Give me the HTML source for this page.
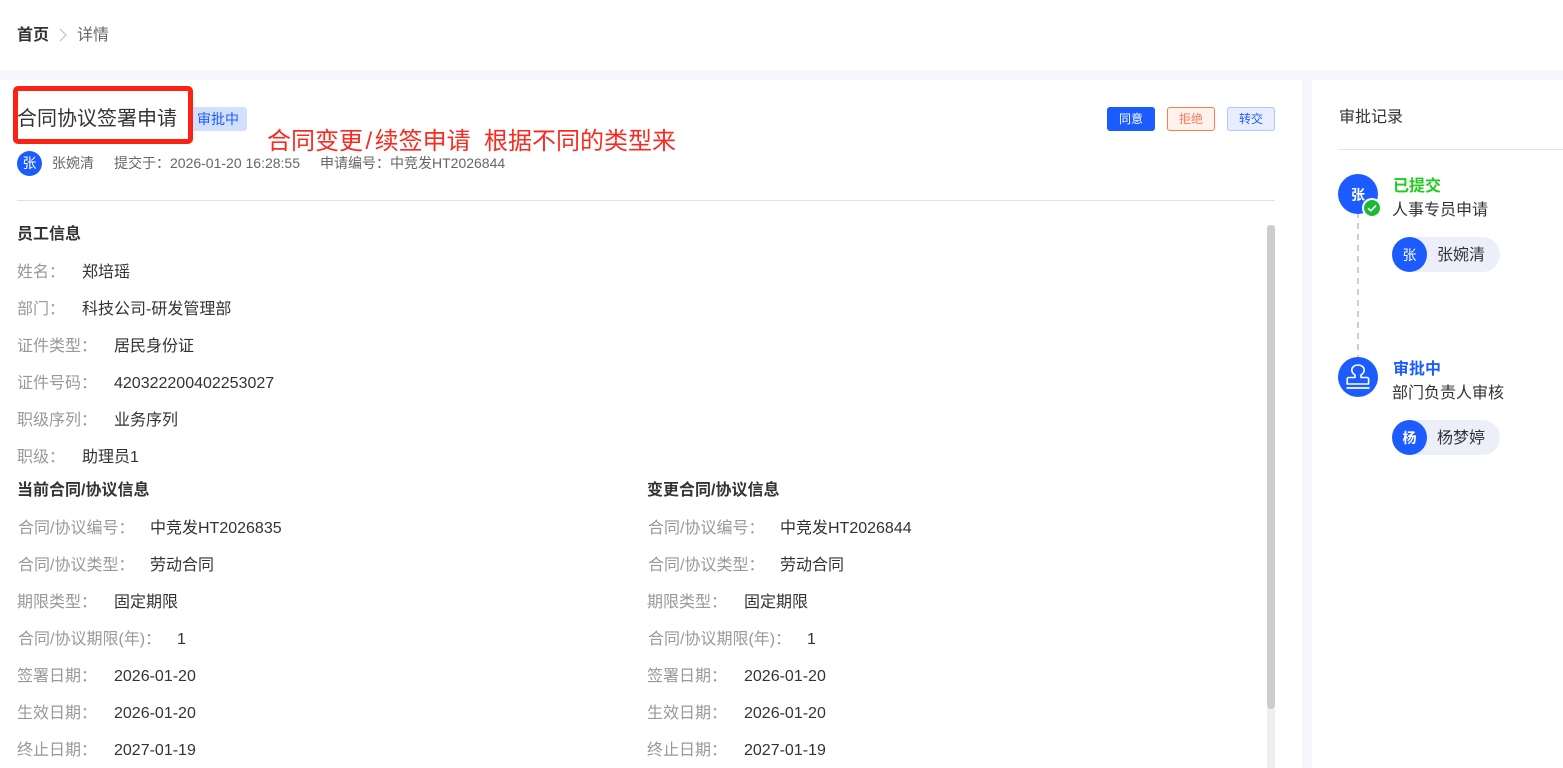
<!DOCTYPE html>
<html lang="zh">
<head>
<meta charset="utf-8">
<title>详情</title>
<style>
html,body{margin:0;padding:0;width:1563px;height:768px;overflow:hidden;background:#fff}
body{position:relative;font-family:"Liberation Sans","Noto Sans CJK SC",sans-serif;color:#333}
.a{position:absolute}
.t{position:absolute;white-space:nowrap;line-height:20px;font-size:16px;margin-top:2px}
.l{color:#999}
.v{color:#333}
.b{font-weight:700;color:#333}
.m{font-size:14px;color:#666;margin-top:0}
.btn{position:absolute;top:107px;width:48px;height:24px;box-sizing:border-box;border-radius:3px;border:1px solid;font-size:12px;line-height:22px;text-align:center}
.c{position:absolute;border-radius:50%;background:#1c5cff;color:#fff;text-align:center}
.pill{position:absolute;left:1392px;width:108px;height:35px;border-radius:18px;background:#eceffa}
</style>
</head>
<body>
<!-- backgrounds -->
<div class="a" style="left:0;top:70px;width:1563px;height:10px;background:#f5f6fb"></div>
<div class="a" style="left:1302px;top:70px;width:10px;height:698px;background:#f5f6fb"></div>

<!-- breadcrumb -->
<div class="t b" style="left:17px;top:24px">首页</div>
<svg class="a" style="left:58px;top:28px" width="10" height="14" viewBox="0 0 10 14"><path d="M2 1l6 6-6 6" fill="none" stroke="#b9b9b9" stroke-width="1"/></svg>
<div class="t" style="left:77px;top:24px;color:#666">详情</div>

<!-- header -->
<div class="t" style="left:17px;top:106px;font-size:20px;line-height:22px;color:#333">合同协议签署申请</div>
<div class="a" style="left:188px;top:107px;width:59px;height:24px;border-radius:3px;background:#d3dfff"></div>
<div class="t" style="left:197px;top:109px;margin-top:0;font-size:14px;color:#1c5cff">审批中</div>
<div class="a" style="left:13px;top:86px;width:180px;height:58px;box-sizing:border-box;border:5px solid #fb2115;border-radius:5px"></div>
<div class="t" style="left:267px;top:125px;font-size:24px;line-height:30px;color:#fb2a20">合同变更<span style="padding:0 2.5px">/</span>续签申请</div>
<div class="t" style="left:484px;top:125px;font-size:24px;line-height:30px;color:#fb2a20">根据不同的类型来</div>

<div class="btn" style="left:1107px;background:#1c5cff;border-color:#1c5cff;color:#fff">同意</div>
<div class="btn" style="left:1167px;background:#fff1ec;border-color:#ff7a55;color:#ff7a55">拒绝</div>
<div class="btn" style="left:1227px;background:#e8eeff;border-color:#a6cbff;color:#1c5cff">转交</div>

<div class="c" style="left:17px;top:151px;width:25px;height:25px;font-size:14px;line-height:25px">张</div>
<div class="t m" style="left:52px;top:153px">张婉清</div>
<div class="t m" style="left:114px;top:153px">提交于：2026-01-20 16:28:55</div>
<div class="t m" style="left:320px;top:153px">申请编号：中竞发HT2026844</div>

<div class="a" style="left:17px;top:200px;width:1258px;height:1px;background:#e0e0e8"></div>

<!-- scrollbar -->
<div class="a" style="left:1267px;top:225px;width:8px;height:543px;background:#eeeeee"></div>
<div class="a" style="left:1267px;top:225px;width:8px;height:484px;border-radius:4px;background:#cdcdcd"></div>

<!-- employee info -->
<div class="t b" style="left:17px;top:223px">员工信息</div>
<div class="t l" style="left:17px;top:261px">姓名：</div><div class="t v" style="left:82px;top:261px">郑培瑶</div>
<div class="t l" style="left:17px;top:298px">部门：</div><div class="t v" style="left:82px;top:298px">科技公司-研发管理部</div>
<div class="t l" style="left:17px;top:335px">证件类型：</div><div class="t v" style="left:114px;top:335px">居民身份证</div>
<div class="t l" style="left:17px;top:372px">证件号码：</div><div class="t v" style="left:114px;top:372px">420322200402253027</div>
<div class="t l" style="left:17px;top:409px">职级序列：</div><div class="t v" style="left:114px;top:409px">业务序列</div>
<div class="t l" style="left:17px;top:446px">职级：</div><div class="t v" style="left:82px;top:446px">助理员1</div>

<!-- current contract -->
<div class="t b" style="left:17px;top:479px">当前合同/协议信息</div>
<div class="t l" style="left:18px;top:517px">合同/协议编号：</div><div class="t v" style="left:150px;top:517px">中竞发HT2026835</div>
<div class="t l" style="left:18px;top:554px">合同/协议类型：</div><div class="t v" style="left:150px;top:554px">劳动合同</div>
<div class="t l" style="left:17px;top:591px">期限类型：</div><div class="t v" style="left:114px;top:591px">固定期限</div>
<div class="t l" style="left:18px;top:628px">合同/协议期限(年)：</div><div class="t v" style="left:177px;top:628px">1</div>
<div class="t l" style="left:17px;top:665px">签署日期：</div><div class="t v" style="left:114px;top:665px">2026-01-20</div>
<div class="t l" style="left:17px;top:702px">生效日期：</div><div class="t v" style="left:114px;top:702px">2026-01-20</div>
<div class="t l" style="left:17px;top:739px">终止日期：</div><div class="t v" style="left:114px;top:739px">2027-01-19</div>

<!-- changed contract -->
<div class="t b" style="left:647px;top:479px">变更合同/协议信息</div>
<div class="t l" style="left:648px;top:517px">合同/协议编号：</div><div class="t v" style="left:780px;top:517px">中竞发HT2026844</div>
<div class="t l" style="left:648px;top:554px">合同/协议类型：</div><div class="t v" style="left:780px;top:554px">劳动合同</div>
<div class="t l" style="left:647px;top:591px">期限类型：</div><div class="t v" style="left:744px;top:591px">固定期限</div>
<div class="t l" style="left:648px;top:628px">合同/协议期限(年)：</div><div class="t v" style="left:807px;top:628px">1</div>
<div class="t l" style="left:647px;top:665px">签署日期：</div><div class="t v" style="left:744px;top:665px">2026-01-20</div>
<div class="t l" style="left:647px;top:702px">生效日期：</div><div class="t v" style="left:744px;top:702px">2026-01-20</div>
<div class="t l" style="left:647px;top:739px">终止日期：</div><div class="t v" style="left:744px;top:739px">2027-01-19</div>

<!-- right panel -->
<div class="t" style="left:1339px;top:106px">审批记录</div>
<div class="a" style="left:1338px;top:149px;width:225px;height:1px;background:#e4e4ea"></div>

<svg class="a" style="left:1356px;top:212px" width="4" height="146"><line x1="2" y1="0" x2="2" y2="146" stroke="#cfcfcf" stroke-width="2" stroke-dasharray="6 5"/></svg>

<div class="c" style="left:1338px;top:174px;width:40px;height:40px;font-size:14px;font-weight:700;line-height:42px">张</div>
<svg class="a" style="left:1362px;top:198px" width="20" height="20" viewBox="0 0 20 20"><circle cx="10" cy="10" r="10" fill="#fff"/><circle cx="10" cy="10" r="8" fill="#1fb83a"/><path d="M6 10.2l2.8 2.6 5.2-5.2" fill="none" stroke="#fff" stroke-width="1.6"/></svg>
<div class="t" style="left:1393px;top:175px;font-weight:700;color:#1fcb1f">已提交</div>
<div class="t" style="left:1392px;top:199px">人事专员申请</div>
<div class="pill" style="top:237px"></div>
<div class="c" style="left:1392px;top:237px;width:35px;height:35px;font-size:14px;line-height:36px">张</div>
<div class="t" style="left:1437px;top:244px">张婉清</div>

<div class="c" style="left:1338px;top:357px;width:40px;height:40px"></div>
<svg class="a" style="left:1338px;top:357px" width="40" height="40" viewBox="0 0 40 40"><path d="M17 20.500v-2.500c-2-1.400-3.200-3-3.200-5 0-3 2.800-5 6.200-5s6.200 2 6.200 5c0 2-1.200 3.600-3.200 5v2.500h6c.9 0 1.600.7 1.600 1.600V27H9.200v-4.900c0-.9.700-1.600 1.600-1.600z" fill="none" stroke="#fff" stroke-width="1.600" stroke-linejoin="round"/><path d="M8.500 31h23" stroke="#dfe8ff" stroke-width="2"/></svg>
<div class="t" style="left:1393px;top:358px;font-weight:700;color:#1c5cff">审批中</div>
<div class="t" style="left:1392px;top:382px">部门负责人审核</div>
<div class="pill" style="top:420px"></div>
<div class="c" style="left:1392px;top:420px;width:35px;height:35px;font-size:14px;font-weight:700;line-height:36px">杨</div>
<div class="t" style="left:1437px;top:427px">杨梦婷</div>
</body>
</html>
